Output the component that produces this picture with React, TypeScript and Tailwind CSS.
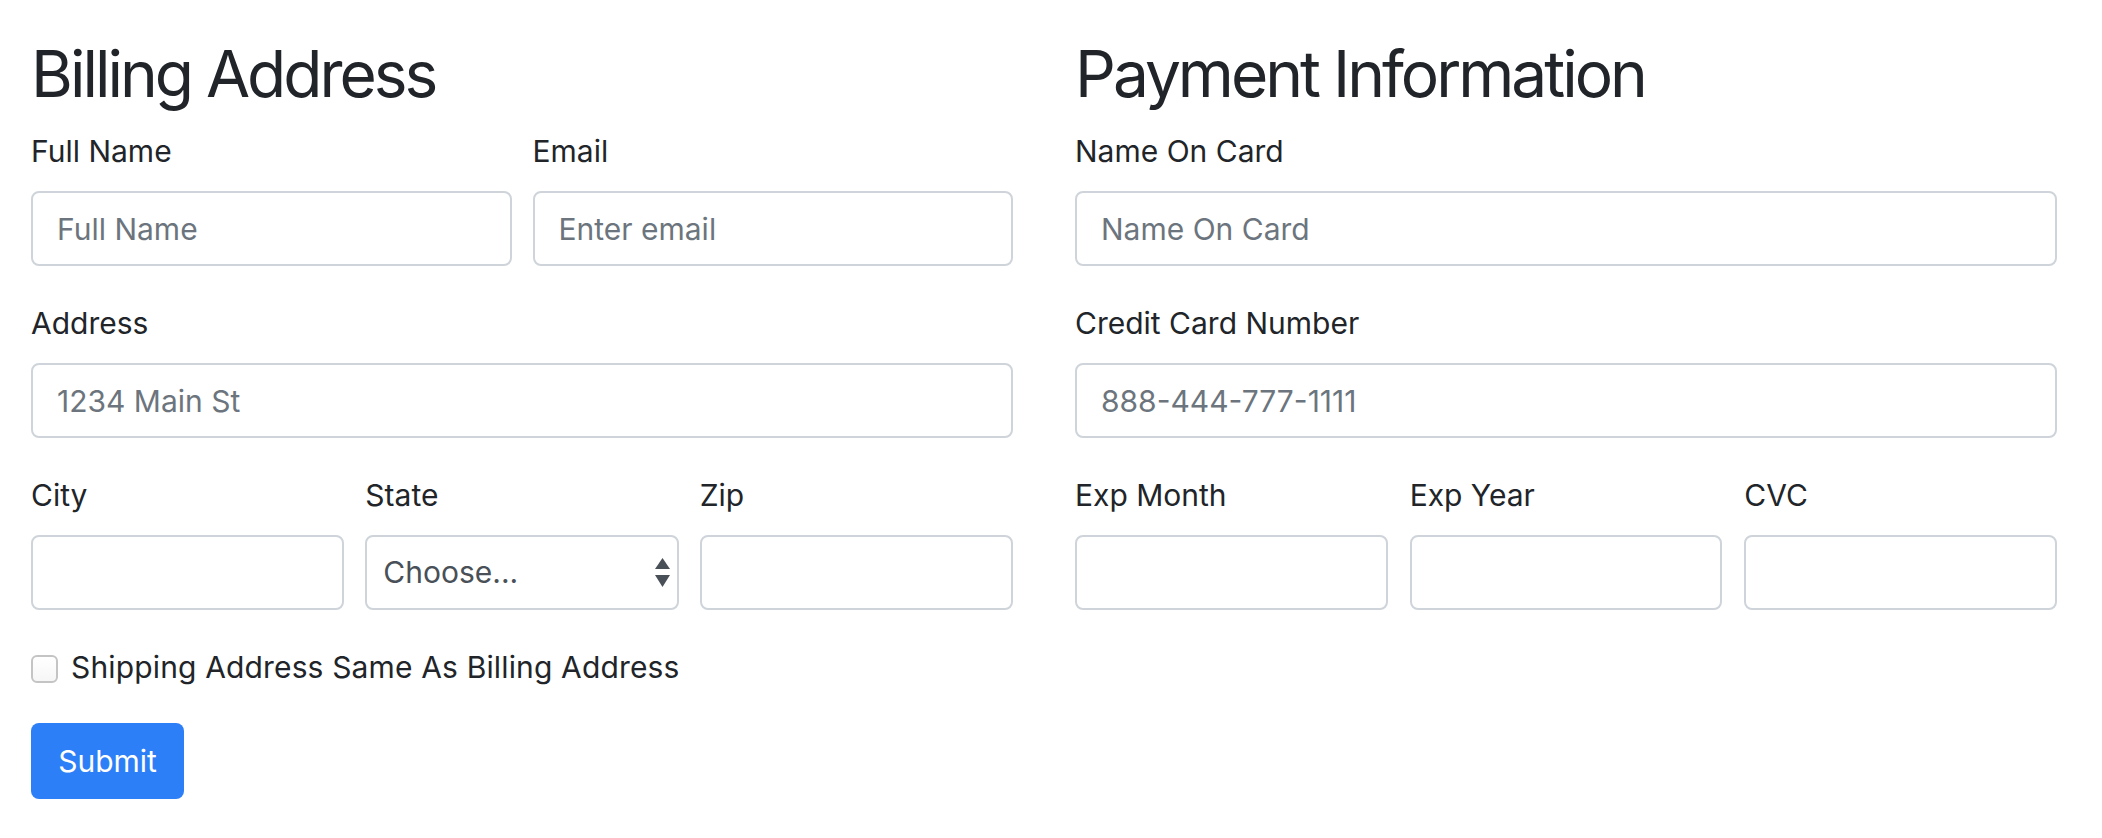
import React from "react";

const font = { fontFamily: "Inter, 'Noto Sans', sans-serif" };

function Field({
  label,
  placeholder,
  className = "",
}: {
  label: string;
  placeholder?: string;
  className?: string;
}) {
  return (
    <div className={className}>
      <label className="block text-[30px] leading-[45px] text-[#212529] mb-[17px]">{label}</label>
      <input
        type="text"
        placeholder={placeholder}
        className="block w-full h-[75px] rounded-[8px] border-2 border-[#ced4da] bg-white pl-[24px] text-[30px] text-[#495057] placeholder:text-[#6c757d] outline-none"
      />
    </div>
  );
}

function SelectField({ label }: { label: string }) {
  return (
    <div>
      <label className="block text-[30px] leading-[45px] text-[#212529] mb-[17px]">{label}</label>
      <div className="flex items-center justify-between h-[75px] rounded-[8px] border-2 border-[#ced4da] bg-white pl-[16px] pr-[7px]">
        <span className="text-[30px] text-[#495057]">Choose...</span>
        {/* native macOS select arrows */}
        <svg width="15" height="29" viewBox="0 0 15 29">
          <polygon points="7.5,0 15,11 0,11" fill="#4a5058" />
          <polygon points="0,17 15,17 7.5,29" fill="#4a5058" />
        </svg>
      </div>
    </div>
  );
}

export default function App() {
  return (
    <div className="bg-white w-[2102px] h-[838px] text-[#212529]" style={font}>
      <div className="flex gap-[62px] pl-[31px] pt-[36px]">
        {/* Billing */}
        <div className="w-[982px]">
          <h2 className="text-[64px] leading-[76px] font-normal tracking-[-3px] mb-[17px]">Billing Address</h2>
          <div className="grid grid-cols-2 gap-x-[21px] mb-[35px]">
            <Field label="Full Name" placeholder="Full Name" />
            <Field label="Email" placeholder="Enter email" />
          </div>
          <Field label="Address" placeholder="1234 Main St" className="mb-[35px]" />
          <div className="grid grid-cols-3 gap-x-[21px] mb-[35px]">
            <Field label="City" />
            <SelectField label="State" />
            <Field label="Zip" />
          </div>
          <div className="flex items-start gap-[13px] h-[45px]">
            <span className="mt-[10px] block w-[27px] h-[28px] rounded-[6px] border-2 border-[#c4c4c4] bg-gradient-to-b from-white to-[#f6f6f6]" />
            <span className="text-[30px] leading-[45px] tracking-[0.15px]">Shipping Address Same As Billing Address</span>
          </div>
          <button className="mt-[33px] w-[153px] h-[76px] rounded-[8px] bg-[#2d7ff7] text-white text-[30px]">
            Submit
          </button>
        </div>

        {/* Payment */}
        <div className="w-[982px]">
          <h2 className="text-[64px] leading-[76px] font-normal tracking-[-3px] mb-[17px]">Payment Information</h2>
          <Field label="Name On Card" placeholder="Name On Card" className="mb-[35px]" />
          <Field label="Credit Card Number" placeholder="888-444-777-1111" className="mb-[35px]" />
          <div className="grid grid-cols-3 gap-x-[22px]">
            <Field label="Exp Month" />
            <Field label="Exp Year" />
            <Field label="CVC" />
          </div>
        </div>
      </div>
    </div>
  );
}
